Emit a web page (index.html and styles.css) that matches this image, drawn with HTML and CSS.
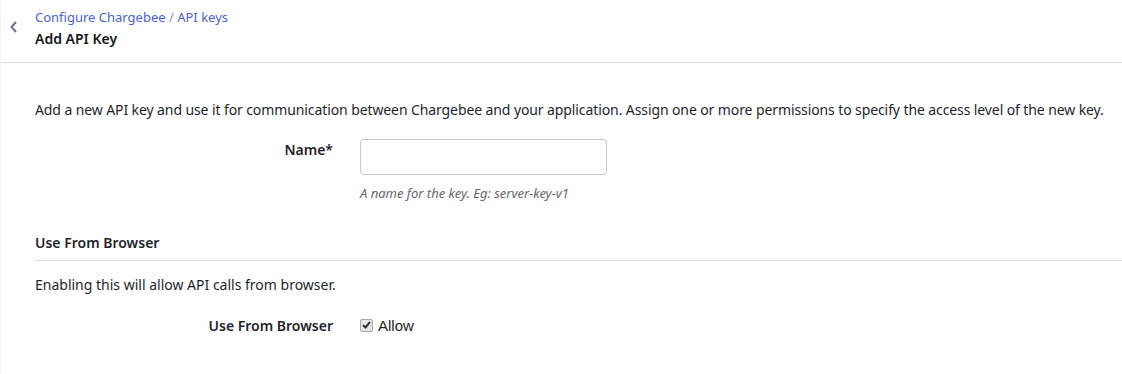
FILE: index.html
```html
<!DOCTYPE html>
<html lang="en">
<head>
    <meta charset="UTF-8">
    <title>Add API Key</title>
    <link rel="stylesheet" href="styles.css">
</head>
<body>
    <div class="page">
        <div class="header">
            <a class="back" href="javascript:void(0)">
                <svg width="9" height="14" viewBox="0 0 9 14"><path d="M7 2 L2.5 7 L7 12" fill="none" stroke="#6e7486" stroke-width="2"/></svg>
            </a>
            <div class="header-text">
                <p class="crumbs"><a href="javascript:void(0)">Configure Chargebee</a> <span class="sep">/</span> <a href="javascript:void(0)">API keys</a></p>
                <h1 class="title">Add API Key</h1>
            </div>
        </div>
        <div class="content">
            <p class="intro">Add a new API key and use it for communication between Chargebee and your application. Assign one or more permissions to specify the access level of the new key.</p>
            <div class="field">
                <label class="field-label" for="keyName">Name*</label>
                <div class="field-ctrl">
                    <input type="text" class="text-input" id="keyName">
                    <p class="hint">A name for the key. Eg: server-key-v1</p>
                </div>
            </div>
            <h2 class="section-title">Use From Browser</h2>
            <p class="section-desc">Enabling this will allow API calls from browser.</p>
            <div class="field field-check">
                <span class="field-label">Use From Browser</span>
                <label class="check">
                    <span class="check-box">
                        <svg width="9" height="8" viewBox="0 0 9 8"><path d="M1 4 L3.5 6.5 L8 1" fill="none" stroke="#333" stroke-width="2"/></svg>
                    </span>
                    Allow
                </label>
            </div>
        </div>
    </div>
</body>
</html>
```

FILE: styles.css
```css
* {
    margin: 0;
    padding: 0;
    box-sizing: border-box;
}
html, body {
    width: 100%;
    height: 100%;
    background: #fff;
    overflow: hidden;
}
body {
    font-family: "Noto Sans", "Open Sans", sans-serif;
    font-size: 14px;
    color: #1f1f2e;
}
.page {
    height: 100%;
    border-left: 1px solid #f2f2f2;
}
.header {
    display: flex;
    height: 63px;
    border-bottom: 1px solid #dcdcdc;
}
.back {
    display: flex;
    align-items: center;
    width: 34px;
    padding-left: 8px;
    padding-bottom: 8px;
}
.header-text {
    padding-top: 6px;
}
.crumbs {
    font-size: 13px;
    line-height: 22px;
    color: #8a8adf;
}
.crumbs a {
    color: #4a5fd8;
    text-decoration: none;
}
.title {
    font-size: 14px;
    font-weight: 600;
    line-height: 22px;
    color: #141421;
}
.content {
    padding: 36px 0 0 34px;
}
.intro {
    line-height: 22px;
    white-space: nowrap;
    letter-spacing: -0.1px;
}
.field {
    display: flex;
    margin-top: 18px;
}
.field-label {
    width: 298px;
    text-align: right;
    font-weight: 600;
    line-height: 22px;
}
.field-ctrl {
    margin-left: 27px;
}
.text-input {
    display: block;
    width: 247px;
    height: 36px;
    border: 1px solid #c6c6cc;
    border-radius: 4px;
    outline: none;
}
.hint {
    margin-top: 9px;
    font-size: 13px;
    font-style: italic;
    color: #66666f;
    line-height: 18px;
}
.section-title {
    margin-top: 30px;
    font-size: 14px;
    font-weight: 600;
    line-height: 22px;
    padding-bottom: 6px;
    border-bottom: 1px solid #dedde6;
}
.section-desc {
    margin-top: 13px;
    line-height: 22px;
}
.field-check {
    margin-top: 19px;
}
.check {
    margin-left: 27px;
    display: flex;
    align-items: center;
    font-family: "Liberation Sans", Arial, sans-serif;
    font-size: 15px;
    color: #222;
    line-height: 22px;
}
.check-box {
    display: flex;
    align-items: center;
    justify-content: center;
    width: 13px;
    height: 13px;
    margin: -2px 5px 0 0;
    border: 1px solid #a9a9a9;
    border-radius: 2px;
    background: #e6e6e6;
}
```
